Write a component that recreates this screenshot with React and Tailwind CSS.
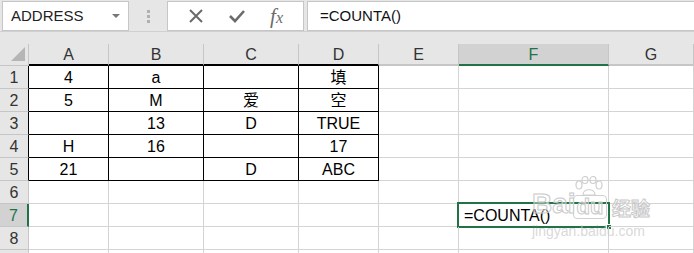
import React from "react";

const cols = [
  { label: "A", w: 80 },
  { label: "B", w: 95 },
  { label: "C", w: 95 },
  { label: "D", w: 80 },
  { label: "E", w: 80 },
  { label: "F", w: 150 },
  { label: "G", w: 85 },
];

const data = [
  ["4", "a", "", "填"],
  ["5", "M", "爱", "空"],
  ["", "13", "D", "TRUE"],
  ["H", "16", "", "17"],
  ["21", "", "D", "ABC"],
];

const font = { fontFamily: '"Liberation Sans", "Noto Sans CJK SC", sans-serif' };

function FormulaBar() {
  return (
    <div className="h-[44px] bg-[#e6e6e6] relative">
      <div className="h-[32px] flex items-start pt-[1px] border-b border-[#d0d0d0]">
        <div className="ml-[2px] w-[127px] h-[30px] bg-white border border-[#c6c6c6] flex items-center justify-between pl-[8px] pr-[8px]">
          <span className="text-[15px] text-[#222]">ADDRESS</span>
          <span className="w-0 h-0 border-l-[4px] border-r-[4px] border-t-[4px] border-l-transparent border-r-transparent border-t-[#777]" />
        </div>
        <div className="w-[38px] h-[30px] flex flex-col items-center justify-center gap-[2px]">
          <span className="w-[3px] h-[3px] bg-[#b0b0b0]" />
          <span className="w-[3px] h-[3px] bg-[#b0b0b0]" />
          <span className="w-[3px] h-[3px] bg-[#b0b0b0]" />
        </div>
        <div className="w-[137px] h-[30px] bg-white border border-[#c6c6c6] flex items-center justify-around px-[8px]">
          <svg width="16" height="16" viewBox="0 0 16 16">
            <path d="M2 2 L14 14 M14 2 L2 14" stroke="#6b6b6b" strokeWidth="2" />
          </svg>
          <svg width="18" height="16" viewBox="0 0 18 16">
            <path d="M2 8 L7 13 L16 3" stroke="#6b6b6b" strokeWidth="2.6" fill="none" />
          </svg>
          <span className="text-[21px] leading-none italic text-[#6b6b6b]" style={{ fontFamily: '"Liberation Serif", serif' }}>
            f<span className="text-[16px]">x</span>
          </span>
        </div>
        <div className="flex-1 ml-[3px] h-[30px] bg-white border-t border-b border-l border-[#c6c6c6] flex items-center pl-[12px]">
          <span className="text-[15px] text-[#111]">=COUNTA()</span>
        </div>
      </div>
    </div>
  );
}

function HeaderRow() {
  return (
    <div className="flex h-[22px] bg-[#e6e6e6]">
      <div className="w-[29px] h-full relative border-r border-[#c6c6c6] border-b border-b-[#c6c6c6]">
        <svg className="absolute right-[3px] bottom-[4px]" width="14" height="14" viewBox="0 0 14 14">
          <path d="M14 0 L14 14 L0 14 Z" fill="#b5b5b5" />
        </svg>
      </div>
      {cols.map((c, i) => {
        const sel = c.label === "F";
        const table = i < 4;
        return (
          <div
            key={c.label}
            style={{ width: c.w }}
            className={`h-full flex items-center justify-center pt-[2px] text-[16px] border-r border-[#c6c6c6] border-b-[2px] ${
              sel ? "bg-[#d2d2d2] text-[#217346] border-b-[#217346]" : table ? "text-[#333] border-b-black" : "text-[#333] border-b-[#c6c6c6]"
            }`}
          >
            {c.label}
          </div>
        );
      })}
    </div>
  );
}

function Row({ n }) {
  const selRow = n === 7;
  const vals = data[n - 1] || [];
  return (
    <div className="flex h-[23px]">
      <div
        className={`w-[29px] h-full flex items-center justify-center pt-[2px] text-[16px] border-b border-[#c6c6c6] ${
          selRow ? "bg-[#d2d2d2] text-[#217346] border-r-[2px] border-r-[#217346]" : n <= 5 ? "bg-[#e6e6e6] text-[#333] border-r border-r-black" : "bg-[#e6e6e6] text-[#333] border-r border-r-[#c6c6c6]"
        }`}
      >
        {n <= 8 ? n : ""}
      </div>
      {cols.map((c, i) => {
        const inTable = n <= 5 && i < 4;
        const isSel = selRow && c.label === "F";
        return (
          <div
            key={c.label}
            style={{ width: c.w }}
            className={`h-full relative flex items-center pt-[2px] text-[16px] text-black border-r border-b ${
              inTable ? "border-black" : "border-[#d4d4d4]"
            } ${isSel ? "justify-start pl-[5px]" : "justify-center"}`}
          >
            {inTable ? vals[i] : isSel ? "=COUNTA()" : ""}
            {isSel && (
              <>
                <span className="absolute -left-[2px] -top-[2px] -right-[2px] -bottom-[2px] border-2 border-[#217346] pointer-events-none" />
                <span className="absolute -right-[4px] -bottom-[4px] w-[6px] h-[6px] bg-[#217346] border border-white" />
              </>
            )}
          </div>
        );
      })}
    </div>
  );
}

function Watermark() {
  const stroke = "[-webkit-text-stroke:1px_#c8c8c8] text-[rgba(255,255,255,0.4)]";
  return (
    <div className="absolute left-[530px] top-[176px] w-[130px] h-[64px] pointer-events-none">
      <svg className="absolute left-[43px] top-0" width="32" height="20" viewBox="0 0 32 20">
        <g fill="none" stroke="#cfcfcf" strokeWidth="1.2">
          <ellipse cx="6" cy="9" rx="3" ry="4" />
          <ellipse cx="12" cy="4" rx="3" ry="3.5" />
          <ellipse cx="20" cy="4" rx="3" ry="3.5" />
          <ellipse cx="26" cy="9" rx="3" ry="4" />
          <path d="M10 19 C10 12 22 12 22 19 Z" />
        </g>
      </svg>
      <div className={`absolute left-[2px] top-[14px] text-[28px] font-bold leading-none ${stroke}`} style={{ fontFamily: '"Liberation Sans", sans-serif' }}>
        Bai
      </div>
      <div className="absolute left-[43px] top-[19px] w-[34px] h-[24px] border border-[#d0d0d0] rounded-[4px] flex items-center justify-center">
        <span className={`text-[22px] font-bold leading-none ${stroke}`} style={{ fontFamily: '"Liberation Sans", sans-serif' }}>du</span>
      </div>
      <div className={`absolute left-[82px] top-[22px] text-[19px] font-bold leading-none ${stroke}`} style={{ fontFamily: '"Noto Sans CJK SC", sans-serif' }}>
        经验
      </div>
      <div className="absolute left-[2px] top-[48px] text-[14px] leading-none text-[rgba(200,200,200,0.7)]" style={{ fontFamily: '"Liberation Sans", sans-serif' }}>
        jingyan.baidu.com
      </div>
    </div>
  );
}

export default function App() {
  return (
    <div className="w-[694px] h-[253px] overflow-hidden bg-white relative select-none" style={font}>
      <FormulaBar />
      <HeaderRow />
      {[1, 2, 3, 4, 5, 6, 7, 8, 9].map((n) => (
        <Row key={n} n={n} />
      ))}
      <Watermark />
    </div>
  );
}
